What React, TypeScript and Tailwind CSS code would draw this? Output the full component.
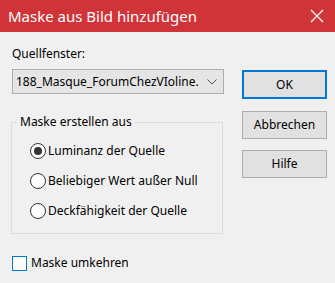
import React from 'react';

const Radio: React.FC<{ label: string; checked?: boolean }> = ({ label, checked }) => {
  return (
    <div className="flex items-center h-[30px]">
      <span className="w-[16px] h-[16px] rounded-full border border-[#333333] bg-white flex items-center justify-center">
        {checked && <span className="w-[8px] h-[8px] rounded-full bg-[#333333]"></span>}
      </span>
      <span className="ml-[2px] text-[12px] text-black leading-[16px]">{label}</span>
    </div>
  );
};

const App: React.FC = () => {
  return (
    <div className="w-[335px] h-[283px] bg-[#f0f0f0] flex flex-col overflow-hidden font-['Noto_Sans',sans-serif]">
      <div className="h-[32px] bg-[#d13438] flex items-center justify-between pl-[8px] pr-[11px] text-white">
        <span className="text-[15px] leading-[20px]">Maske aus Bild hinzufügen</span>
        <svg width="14" height="14" viewBox="0 0 14 14">
          <path d="M1 1 L13 13 M13 1 L1 13" stroke="white" strokeWidth="1.2" fill="none" />
        </svg>
      </div>
      <div className="flex flex-row">
        <div className="flex flex-col pl-[11px] w-[224px]">
          <div className="mt-[14px] ml-[1px] text-[12px] leading-[16px] text-black">Quellfenster:</div>
          <div className="mt-[7px] ml-[1px] w-[212px] h-[25px] bg-[#e5e5e5] border border-[#adadad] flex items-center justify-between pl-[3px] pr-[6px]">
            <span className="text-[12px] leading-[16px] text-black">188_Masque_ForumChezVIoline.</span>
            <svg width="10" height="6" viewBox="0 0 10 6">
              <path d="M0.5 0.5 L5 5 L9.5 0.5" stroke="#555555" strokeWidth="1" fill="none" />
            </svg>
          </div>
          <fieldset className="mt-[20px] w-[212px] h-[120px] border border-[#dcdcdc] pt-[6px]">
            <legend className="ml-[5px] px-[3px] text-[12px] leading-[16px] text-black">Maske erstellen aus</legend>
            <div className="pl-[18px] flex flex-col">
              <Radio label="Luminanz der Quelle" checked />
              <Radio label="Beliebiger Wert außer Null" />
              <Radio label="Deckfähigkeit der Quelle" />
            </div>
          </fieldset>
          <div className="mt-[21px] ml-[1px] flex items-center">
            <span className="w-[15px] h-[15px] border border-[#0078d7] bg-white"></span>
            <span className="ml-[4px] text-[12px] leading-[16px] text-black">Maske umkehren</span>
          </div>
        </div>
        <div className="flex flex-col ml-[18px] mt-[38px]">
          <button className="w-[85px] h-[29px] bg-[#e1e1e1] border-2 border-[#0078d7] text-[12px] text-black">OK</button>
          <button className="mt-[12px] w-[85px] h-[28px] bg-[#e1e1e1] border border-[#adadad] text-[12px] text-black">Abbrechen</button>
          <button className="mt-[11px] w-[85px] h-[28px] bg-[#e1e1e1] border border-[#adadad] text-[12px] text-black">Hilfe</button>
        </div>
      </div>
    </div>
  );
};

export default App;
